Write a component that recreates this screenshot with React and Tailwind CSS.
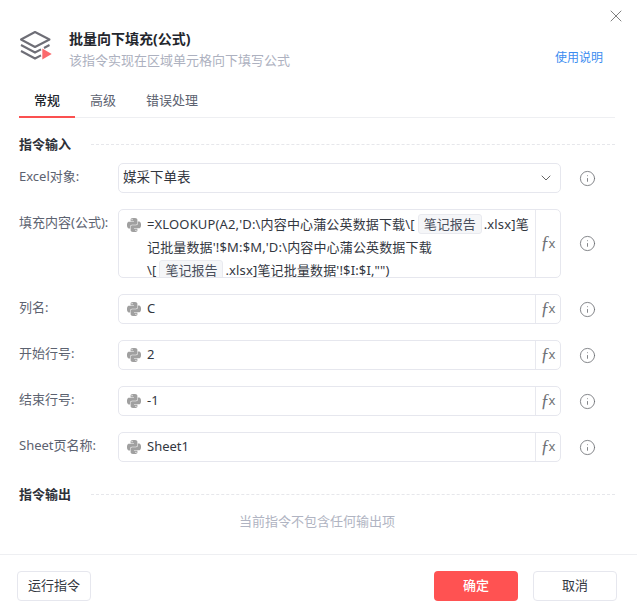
import { SiPython } from "react-icons/si";
import { FiX, FiChevronDown, FiInfo } from "react-icons/fi";

const FONT = { fontFamily: '"Noto Sans", "Noto Sans CJK SC", sans-serif' };

function LayersIcon() {
  return (
    <svg width="36" height="32" viewBox="0 0 36 32" fill="none" className="shrink-0 -ml-[1px]">
      <path d="M17 2 L31.5 9.5 L17 17 L3 9.5 Z" stroke="#6e6e76" strokeWidth="2" strokeLinejoin="round" />
      <path d="M3 15 L17 22.5 L23 19.3 M31.5 15 L26 18" stroke="#6e6e76" strokeWidth="2" />
      <path d="M3 21 L17 28.5 L23 25.3" stroke="#6e6e76" strokeWidth="2" />
      <path d="M24.3 18.5 L33.7 24 L24.3 29.5 Z" fill="#fb6a6d" />
    </svg>
  );
}

function Chip({ children }) {
  return (
    <span className="inline-block h-[20px] leading-[18px] ml-[3px] mr-[2px] px-[5px] tracking-normal bg-[#f5f6f8] border border-[#e9eaef] rounded-[3px] text-[#4a4f5c]">
      {children}
    </span>
  );
}

function FxBox() {
  return (
    <div className="w-[25px] shrink-0 flex items-center justify-center border-l border-[#e8e9ef] text-[#6f7176]">
      <span className="font-['Liberation_Serif'] italic text-[18px] leading-none">ƒ</span>
      <span className="text-[13px] leading-none -ml-[1px]">x</span>
    </div>
  );
}

function Row({ label, children, className = "h-[30px]" }) {
  return (
    <div className="flex items-start">
      <div className="w-[99px] shrink-0 text-[13px] leading-[26px] text-[#5c6270]">{label}</div>
      <div className={`w-[443px] shrink-0 flex border border-[#e6e7ee] rounded-[5px] bg-white overflow-hidden ${className}`}>
        {children}
      </div>
      <div className={`ml-[18px] pt-[1px] flex items-center text-[#6f7176] ${className}`}>
        <FiInfo size={17} strokeWidth={1.2} />
      </div>
    </div>
  );
}

function TextField({ label, value }) {
  return (
    <Row label={label}>
      <div className="flex-1 flex items-center pl-[8px] pt-[1px] text-[13px] text-[#33373f]">
        <SiPython size={14} className="text-[#a0a0a0] mr-[6px]" />
        {value}
      </div>
      <FxBox />
    </Row>
  );
}

function SectionTitle({ children }) {
  return (
    <div className="flex items-center pr-[22px]">
      <div className="w-[72px] shrink-0 text-[13px] font-bold text-[#2c3038]">{children}</div>
      <div className="flex-1 border-t border-dashed border-[#e6e7eb]" />
    </div>
  );
}

export default function App() {
  return (
    <div style={FONT} className="relative w-[637px] h-[612px] bg-white overflow-hidden flex flex-col">
      <button className="absolute top-[6px] right-[11px] text-[#666]">
        <FiX size={20} strokeWidth={1} />
      </button>

      <div className="flex items-start pl-[19px] pr-[34px] pt-[30px] h-[83px]">
        <LayersIcon />
        <div className="ml-[15px] flex-1">
          <div className="text-[14px] leading-[18px] font-bold text-[#23262d]">批量向下填充(公式)</div>
          <div className="mt-[3px] flex items-start justify-between">
            <span className="text-[13px] leading-[18px] text-[#adb1c0]">该指令实现在区域单元格向下填写公式</span>
            <a className="text-[12px] leading-[16px] -mt-[1px] text-[#3b8cf0]">使用说明</a>
          </div>
        </div>
      </div>

      <div className="mx-[19px] mr-[22px] flex h-[35px] border-b border-[#eeeff2] text-[13px]">
        <div className="relative px-[15px] pt-[8px] font-medium text-[#23262d]">
          常规
          <div className="absolute left-0 right-0 bottom-[-1px] h-[2px] bg-[#fb5050]" />
        </div>
        <div className="px-[15px] pt-[8px] text-[#5c6270]">高级</div>
        <div className="px-[15px] pt-[8px] text-[#5c6270]">错误处理</div>
      </div>

      <div className="pl-[19px] mt-[17px]">
        <SectionTitle>指令输入</SectionTitle>
        <div className="mt-[8px] flex flex-col gap-[16px]">
          <Row label="Excel对象:">
            <div className="flex-1 flex items-center justify-between pl-[4px] pr-[6px] text-[13.5px] text-[#33373f]">
              媒采下单表
              <FiChevronDown size={16} strokeWidth={1.5} className="text-[#666]" />
            </div>
          </Row>
          <Row label="填充内容(公式):" className="h-[69px]">
            <div className="flex-1 flex pl-[8px] pt-[3px] text-[13px] leading-[23px] tracking-[0.15px] text-[#33373f] overflow-hidden">
              <SiPython size={14} className="text-[#a0a0a0] mr-[6px] mt-[5px] shrink-0" />
              <div className="whitespace-nowrap">
                =XLOOKUP(A2,'D:\内容中心蒲公英数据下载\[<Chip>笔记报告</Chip>.xlsx]笔
                <br />
                记批量数据'!$M:$M,'D:\内容中心蒲公英数据下载
                <br />
                \[<Chip>笔记报告</Chip>.xlsx]笔记批量数据'!$I:$I,"")
              </div>
            </div>
            <FxBox />
          </Row>
          <TextField label="列名:" value="C" />
          <TextField label="开始行号:" value="2" />
          <TextField label="结束行号:" value="-1" />
          <TextField label="Sheet页名称:" value="Sheet1" />
        </div>
        <div className="mt-[23px]">
          <SectionTitle>指令输出</SectionTitle>
        </div>
      </div>

      <div className="h-[36px] pr-[3px] flex items-center justify-center text-[13px] text-[#b0b4c2]">
        当前指令不包含任何输出项
      </div>

      <div className="mt-auto h-[58px] border-t border-[#eeeff2] flex items-start justify-between pl-[17px] pr-[20px] pt-[16px]">
        <button className="h-[30px] w-[74px] border border-[#e6e7ee] rounded-[4px] text-[13px] text-[#33373f]">运行指令</button>
        <div className="flex gap-[15px]">
          <button className="h-[30px] w-[84px] rounded-[4px] bg-[#ff5252] text-[13px] font-medium text-white">确定</button>
          <button className="h-[30px] w-[84px] border border-[#e6e7ee] rounded-[4px] text-[13px] text-[#33373f]">取消</button>
        </div>
      </div>
    </div>
  );
}
